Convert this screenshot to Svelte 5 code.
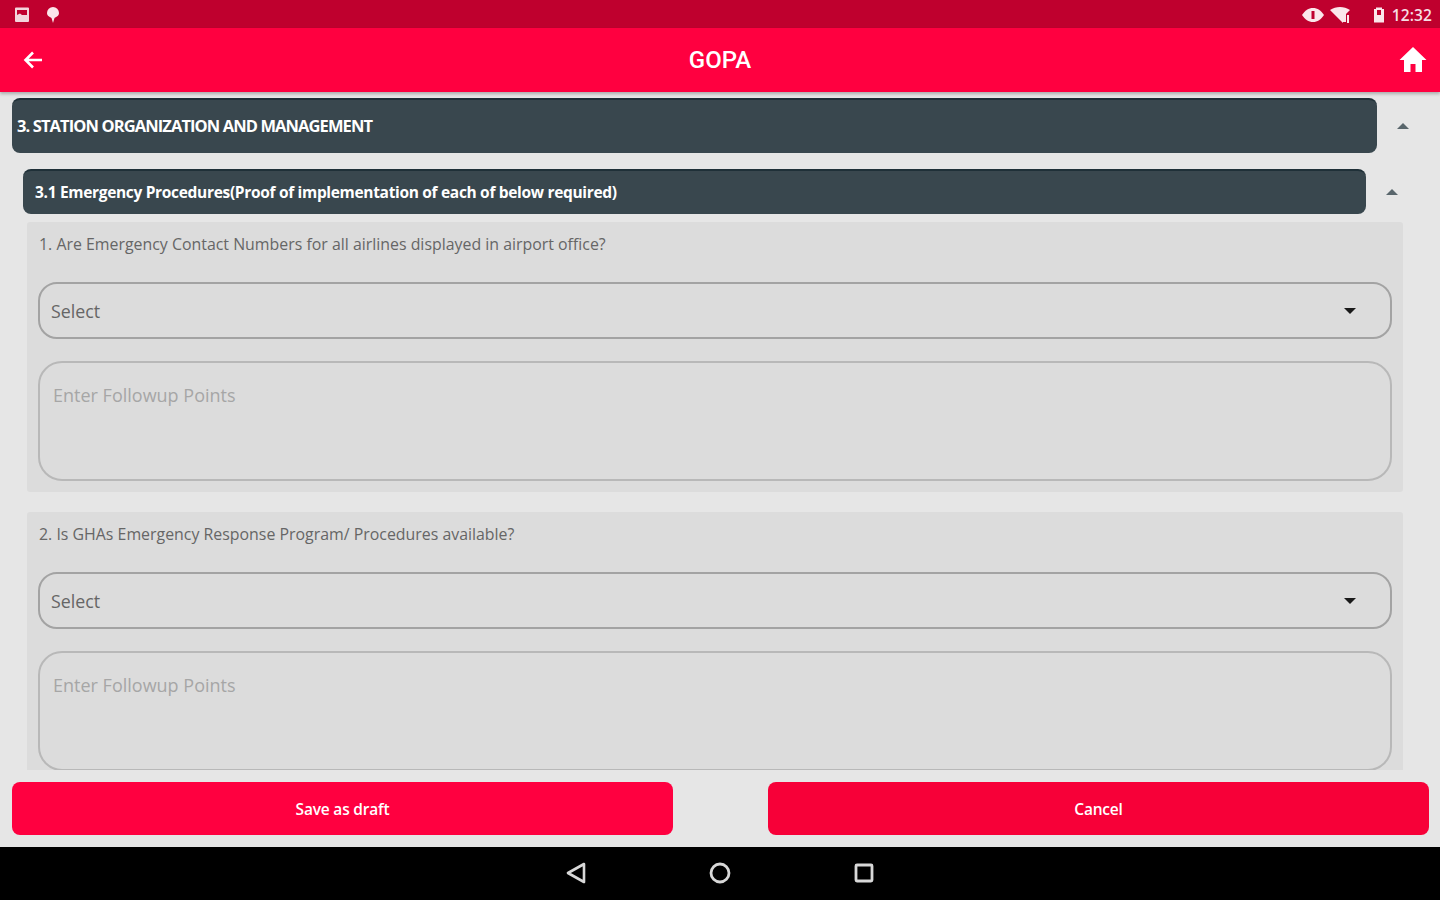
<script>
  const questions = [
    '1. Are Emergency Contact Numbers for all airlines displayed in airport office?',
    '2. Is GHAs Emergency Response Program/ Procedures available?'
  ];
</script>

<div class="screen">
  <div class="status-bar">
    <div class="status-group">
      <svg width="18" height="18" viewBox="0 0 18 18"><path d="M2 1.500h12a1 1 0 0 1 1 1V15a1 1 0 0 1-1 1H2a1 1 0 0 1-1-1V2.500a1 1 0 0 1 1-1z" fill="#f3d5dc"/><path d="M3 4h10v5H8L6 7.500 3 9z" fill="#c0002f"/></svg>
      <svg class="pin" width="16" height="18" viewBox="0 0 16 18"><path d="M8 1a6 6 0 0 1 6 6c0 3-3 4-4.500 5L8 17l-1.500-5C5 11 2 10 2 7a6 6 0 0 1 6-6z" fill="#fbe6eb"/></svg>
    </div>
    <div class="status-group right">
      <svg class="eye" width="24" height="18" viewBox="0 0 24 18"><path d="M1 9c3-4.500 6.500-7 11-7s8 2.500 11 7c-3 4.500-6.500 7-11 7S4 13.500 1 9z" fill="#fbe6eb"/><rect x="10.500" y="5" width="3" height="8" fill="#c0002f"/></svg>
      <svg class="wifi" width="22" height="18" viewBox="0 0 22 18"><path d="M1 4c6-4 14-4 20 0l-4 4v8h-3l0 1z" fill="#fbe6eb"/><rect x="18" y="9" width="2" height="8" fill="#fbe6eb"/></svg>
      <svg class="battery" width="14" height="18" viewBox="0 0 14 18"><path d="M4 1.500h6V3h2v13.500H2V3h2z" fill="#fbe6eb"/><rect x="5" y="4" width="4" height="5" fill="#c0002f"/></svg>
      <span class="time">12:32</span>
    </div>
  </div>

  <header class="app-bar">
    <svg class="back" width="22" height="22" viewBox="0 0 22 22"><path d="M20 11H4M11 3.500 3.500 11l7.500 7.500" fill="none" stroke="#fff" stroke-width="2.600"/></svg>
    <h1>GOPA</h1>
    <svg class="home" width="30" height="30" viewBox="0 0 30 30"><path d="M15 2 1.500 15H6v12h6.500v-8h5v8H24V15h4.500z" fill="#fff"/></svg>
  </header>

  <main class="content">
    <div class="scroll">
      <div class="section-row">
        <div class="section-head">3. STATION ORGANIZATION AND MANAGEMENT</div>
        <span class="caret"></span>
      </div>
      <div class="sub-row">
        <div class="sub-head">3.1 Emergency Procedures(Proof of implementation of each of below required)</div>
        <span class="caret"></span>
      </div>

      {#each questions as q}
        <section class="card">
          <p class="question">{q}</p>
          <div class="select">
            <span>Select</span>
            <span class="drop"></span>
          </div>
          <div class="followup">Enter Followup Points</div>
        </section>
      {/each}
    </div>

    <footer class="actions">
      <button type="button" class="save">Save as draft</button>
      <button type="button" class="cancel">Cancel</button>
    </footer>
  </main>

  <nav class="nav-bar">
    <svg width="24" height="26" viewBox="0 0 24 26"><path d="M20 4 4 13l16 9z" fill="none" stroke="#d8d8d8" stroke-width="2.600" stroke-linejoin="round"/></svg>
    <svg width="24" height="26" viewBox="0 0 24 26"><circle cx="12" cy="13" r="9" fill="none" stroke="#d8d8d8" stroke-width="2.800"/></svg>
    <svg width="24" height="26" viewBox="0 0 24 26"><rect x="4" y="5" width="16" height="16" rx="1" fill="none" stroke="#d8d8d8" stroke-width="2.800"/></svg>
  </nav>
</div>

<style>
  :global(body) {
    margin: 0;
    background: #e6e6e6;
  }

  .screen {
    width: 1440px;
    height: 900px;
    display: flex;
    flex-direction: column;
    overflow: hidden;
    font-family: "Open Sans", "Liberation Sans", sans-serif;
  }

  .status-bar {
    height: 28px;
    flex: none;
    display: flex;
    justify-content: space-between;
    align-items: center;
    padding: 2px 8px 0 14px;
    box-sizing: border-box;
    background: #bf002e;
  }

  .status-group {
    display: flex;
    align-items: center;
    gap: 13px;
  }

  .status-group.right {
    gap: 3px;
  }

  .eye {
    margin-right: 1px;
  }

  .wifi {
    margin-right: 18px;
  }

  .battery {
    margin-right: 3px;
  }

  .time {
    font-size: 15.500px;
    font-weight: 600;
    color: #f6dde3;
    letter-spacing: 0.1px;
  }

  .app-bar {
    height: 64px;
    flex: none;
    display: flex;
    align-items: center;
    justify-content: space-between;
    padding: 0 12px 0 22px;
    background: #ff0040;
    box-shadow: 0 2px 3px rgba(0, 0, 0, 0.25);
    position: relative;
    z-index: 1;
  }

  .app-bar h1 {
    margin: 0 2px 0 0;
    font-family: Roboto, "Liberation Sans", sans-serif;
    font-size: 24px;
    font-weight: 500;
    color: #fff;
  }

  .content {
    flex: 1;
    min-height: 0;
    display: flex;
    flex-direction: column;
    background: #e6e6e6;
  }

  .scroll {
    height: 678px;
    flex: none;
    overflow: hidden;
    padding-top: 6px;
    box-sizing: border-box;
  }

  .section-row {
    display: flex;
    align-items: center;
    padding-left: 12px;
  }

  .section-head {
    width: 1365px;
    height: 55px;
    box-sizing: border-box;
    display: flex;
    align-items: center;
    padding: 0 0 3px 5px;
    border-radius: 8px;
    background: #39474e;
    border-top: 2px solid #1f3038;
    font-size: 16.500px;
    font-weight: 700;
    letter-spacing: -0.9px;
    color: #fff;
    white-space: nowrap;
  }

  .caret {
    width: 0;
    height: 0;
    margin-left: 20px;
    border-left: 6px solid transparent;
    border-right: 6px solid transparent;
    border-bottom: 6px solid #59666c;
  }

  .sub-row {
    display: flex;
    align-items: center;
    margin-top: 16px;
    padding-left: 23px;
  }

  .sub-head {
    width: 1343px;
    height: 45px;
    box-sizing: border-box;
    display: flex;
    align-items: center;
    padding: 0 0 2px 12px;
    border-radius: 8px;
    background: #39474e;
    border-top: 2px solid #1f3038;
    font-size: 15.500px;
    font-weight: 700;
    letter-spacing: -0.32px;
    color: #fff;
    white-space: nowrap;
  }

  .card {
    width: 1376px;
    height: 270px;
    box-sizing: border-box;
    margin: 8px 0 20px 27px;
    padding: 12px 11px 0;
    border-radius: 3px;
    background: #dcdcdc;
  }

  .question {
    margin: 0;
    height: 48px;
    padding-left: 1px;
    font-size: 15.900px;
    line-height: 20px;
    color: #666;
    white-space: nowrap;
  }

  .select {
    height: 57px;
    box-sizing: border-box;
    display: flex;
    align-items: center;
    justify-content: space-between;
    padding: 0 34px 0 11px;
    border: 2px solid #a3a3a3;
    border-radius: 19px;
    font-size: 17.800px;
    color: #666;
  }

  .drop {
    width: 0;
    height: 0;
    border-left: 6px solid transparent;
    border-right: 6px solid transparent;
    border-top: 6px solid #1a1a1a;
  }

  .followup {
    height: 120px;
    box-sizing: border-box;
    margin-top: 22px;
    padding: 20px 13px 0;
    border: 2px solid #b8b8b8;
    border-radius: 24px;
    font-size: 18px;
    line-height: 24px;
    color: #a6a6a6;
  }

  .actions {
    flex: 1;
    display: flex;
    justify-content: space-between;
    align-items: flex-start;
    padding: 12px 11px 0 12px;
    background: #e6e6e6;
  }

  .actions button {
    width: 661px;
    height: 53px;
    border: none;
    border-radius: 8px;
    font-family: inherit;
    font-size: 15.500px;
    font-weight: 600;
    letter-spacing: -0.2px;
    color: #fff;
  }

  .save {
    background: #ff0040;
  }

  .cancel {
    background: #f70038;
  }

  .nav-bar {
    height: 53px;
    flex: none;
    box-sizing: border-box;
    padding-bottom: 2px;
    display: flex;
    justify-content: center;
    align-items: center;
    gap: 120px;
    background: #000;
  }
</style>
